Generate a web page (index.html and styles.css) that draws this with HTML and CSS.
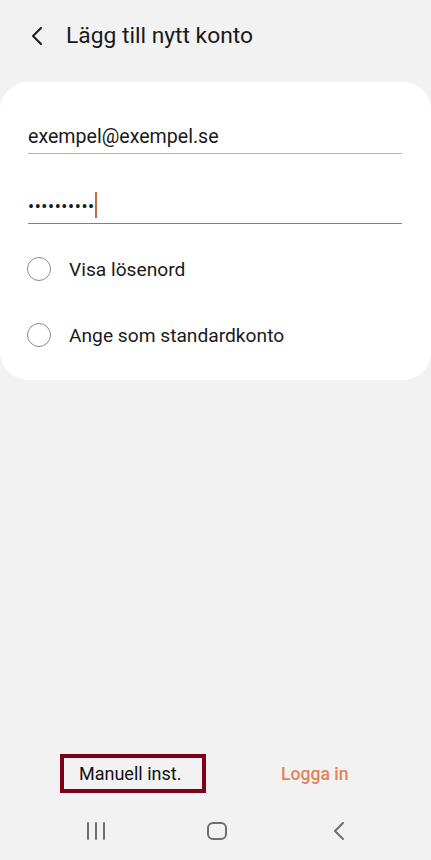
FILE: index.html
```html
<!DOCTYPE html>
<html lang="sv">
<head>
  <meta charset="utf-8">
  <title>Lägg till nytt konto</title>
  <link rel="stylesheet" href="styles.css">
</head>
<body>
  <div class="screen">
    <div class="topbar">
      <svg class="back" width="14" height="20" viewBox="0 0 14 20">
        <path d="M11 2 L3 10 L11 18" fill="none" stroke="#1a1a1a" stroke-width="2" stroke-linecap="round" stroke-linejoin="round"/>
      </svg>
      <span class="title">Lägg till nytt konto</span>
    </div>

    <div class="card">
      <div class="field email">exempel@exempel.se</div>
      <div class="field pass"><span class="dots">••••••••••</span><span class="cursor"></span></div>

      <div class="option first">
        <span class="radio"></span>
        <span class="label">Visa lösenord</span>
      </div>
      <div class="option">
        <span class="radio"></span>
        <span class="label">Ange som standardkonto</span>
      </div>
    </div>

    <div class="spacer"></div>

    <div class="actions">
      <div class="manual">Manuell inst.</div>
      <div class="login">Logga in</div>
    </div>

    <div class="navbar">
      <svg class="nav-recent" width="20" height="18" viewBox="0 0 20 18">
        <path d="M2 1 V17 M10 1 V17 M18 1 V17" stroke="#6f6f6f" stroke-width="2" stroke-linecap="round"/>
      </svg>
      <svg class="nav-home" width="20" height="18" viewBox="0 0 20 18">
        <rect x="1" y="1" width="18" height="16" rx="5" fill="none" stroke="#6f6f6f" stroke-width="2"/>
      </svg>
      <svg class="nav-back" width="12" height="18" viewBox="0 0 12 18">
        <path d="M10 1 L2 9 L10 17" fill="none" stroke="#6f6f6f" stroke-width="2" stroke-linecap="round" stroke-linejoin="round"/>
      </svg>
    </div>
  </div>
</body>
</html>
```

FILE: styles.css
```css
body {
  margin: 0;
  background: #f2f2f2;
  font-family: Roboto, "Liberation Sans", Arial, sans-serif;
  color: #1a1a1a;
}
.screen {
  width: 431px;
  height: 860px;
  display: flex;
  flex-direction: column;
}
.topbar {
  height: 82px;
  display: flex;
  align-items: flex-start;
  padding-left: 30px;
  box-sizing: border-box;
}
.back {
  margin-top: 26px;
}
.title {
  margin-left: 22px;
  margin-top: 22px;
  font-size: 22.8px;
  line-height: 28px;
}
.card {
  background: #fff;
  border-radius: 28px;
  height: 298px;
  box-sizing: border-box;
  padding: 0 29px 0 28px;
}
.field {
  font-size: 19.6px;
}
.email {
  margin-top: 43px;
  line-height: 24px;
  padding-bottom: 4px;
  border-bottom: 1px solid #b4b4b4;
}
.pass {
  margin-top: 38px;
  height: 26px;
  padding-bottom: 5px;
  border-bottom: 1.5px solid #c8693f;
  display: flex;
  align-items: flex-start;
}
.dots {
  font-size: 18px;
  letter-spacing: 0.6px;
  line-height: 26px;
  padding-top: 2px;
}
.cursor {
  width: 2px;
  height: 26px;
  background: #c36a44;
}
.option {
  height: 66px;
  display: flex;
  align-items: center;
}
.option.first {
  margin-top: 12px;
}
.radio {
  width: 22px;
  height: 22px;
  border: 1.2px solid #8a8a8a;
  border-radius: 50%;
  margin-left: -1px;
}
.label {
  margin-left: 18px;
  font-size: 19.2px;
}
.spacer {
  flex: 1;
}
.actions {
  display: flex;
  align-items: center;
  padding-left: 60px;
}
.manual {
  width: 146px;
  height: 39px;
  box-sizing: border-box;
  border: 4px solid #7e0018;
  padding-left: 15px;
  font-size: 18px;
  line-height: 31px;
  color: #111;
}
.login {
  margin-left: 75px;
  font-size: 17.6px;
  font-weight: 500;
  color: #e0845a;
}
.navbar {
  height: 67px;
  box-sizing: border-box;
  display: flex;
  align-items: flex-start;
  padding: 29px 0 0 86px;
}
.nav-home {
  margin-left: 101px;
}
.nav-back {
  margin-left: 106px;
}
```
